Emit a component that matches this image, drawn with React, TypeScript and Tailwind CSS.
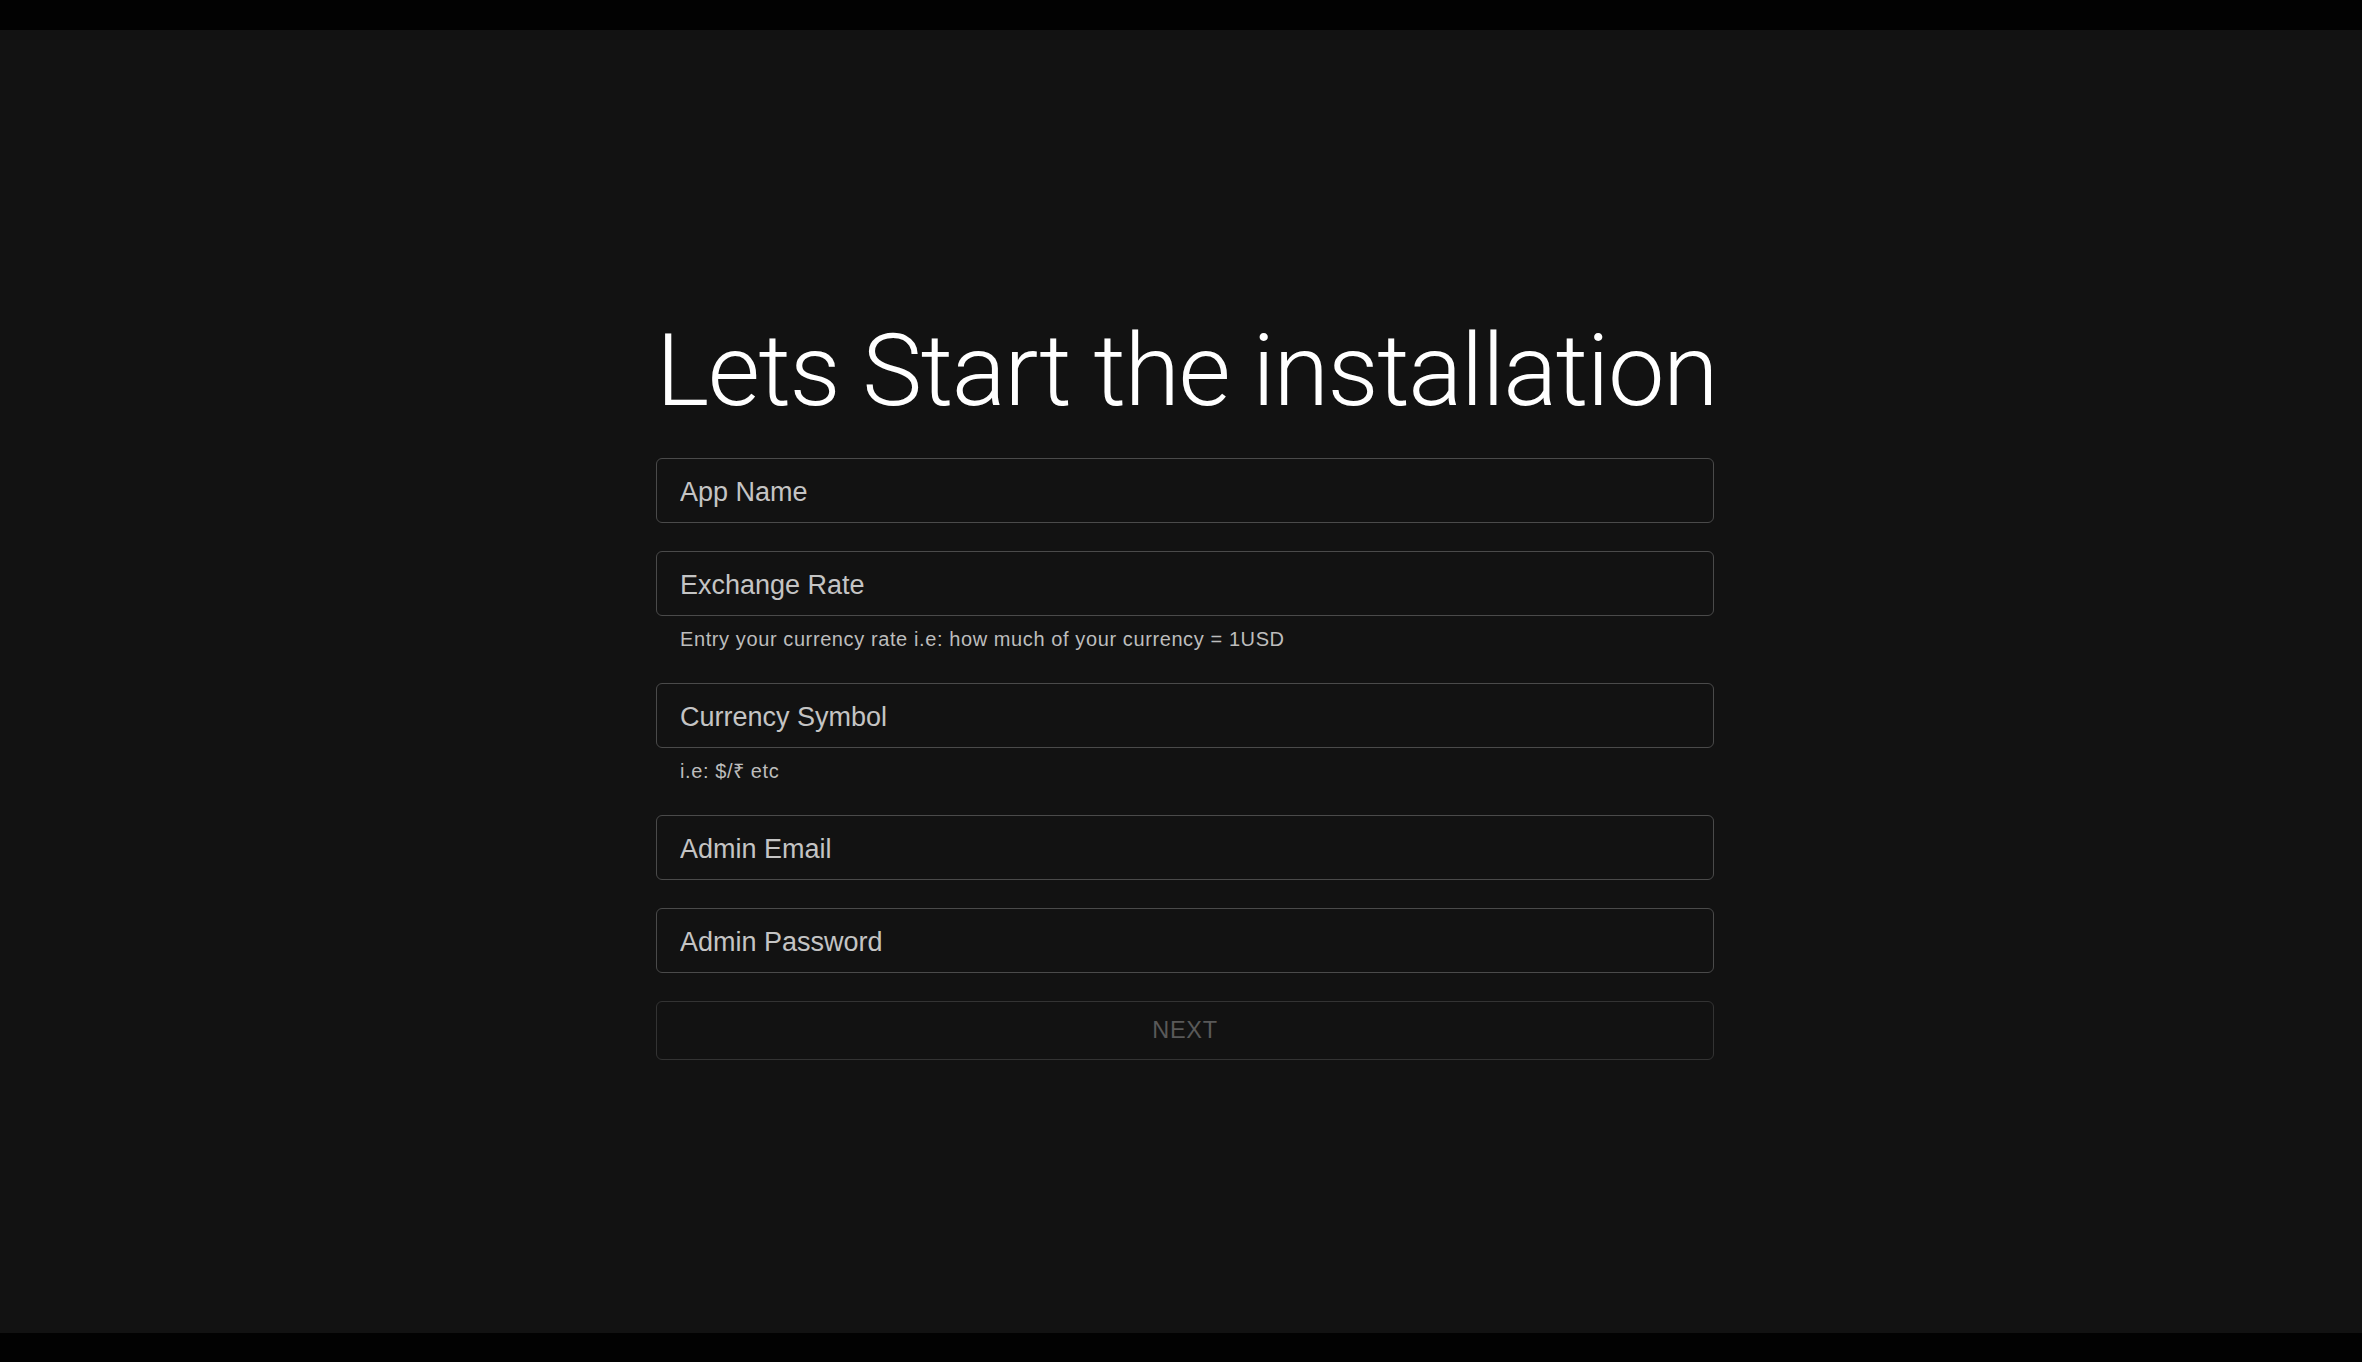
import React from 'react';

type Field = {
  placeholder: string;
  type?: string;
  helper?: string;
};

const fields: Field[] = [
  { placeholder: 'App Name' },
  { placeholder: 'Exchange Rate', helper: 'Entry your currency rate i.e: how much of your currency = 1USD' },
  { placeholder: 'Currency Symbol', helper: 'i.e: $/₹ etc' },
  { placeholder: 'Admin Email', type: 'email' },
  { placeholder: 'Admin Password', type: 'password' },
];

export default function App() {
  return (
    <div className="w-full h-[1362px] flex flex-col bg-black font-['Liberation_Sans',Arial,sans-serif]">
      {/* letterbox bars */}
      <div className="h-[30px] shrink-0 bg-[#020202]" />

      <main className="flex-1 bg-[#121212] flex justify-center pl-[8px] pt-[290px]">
        <div className="w-[1058px] flex flex-col">
          <h1 className="whitespace-nowrap text-center text-white text-[101px] leading-none tracking-[-1.5px] font-light font-['Roboto','Liberation_Sans',sans-serif]">
            Lets Start the installation
          </h1>

          <form className="mt-[37px] flex flex-col gap-[28px]" onSubmit={(e) => e.preventDefault()}>
            {fields.map((f) => (
              <div key={f.placeholder} className="flex flex-col">
                <input
                  type={f.type ?? 'text'}
                  placeholder={f.placeholder}
                  className="h-[65px] w-full rounded-md border border-[#4a4a4a] bg-[#121212] pl-[23px] pt-[3px] text-[27px] text-[#c4c4c4] placeholder:text-[#c4c4c4] outline-none"
                />
                {f.helper && (
                  <p className="mt-[8px] pl-[24px] text-[20px] leading-[31px] tracking-[0.6px] text-[#bdbdbd]">
                    {f.helper}
                  </p>
                )}
              </div>
            ))}

            <button
              type="submit"
              disabled
              className="h-[59px] w-full rounded-md border border-[#333333] bg-transparent text-[23.5px] uppercase tracking-[0.66px] text-[#595959]"
            >
              Next
            </button>
          </form>
        </div>
      </main>

      <div className="h-[29px] shrink-0 bg-[#020202]" />
    </div>
  );
}
